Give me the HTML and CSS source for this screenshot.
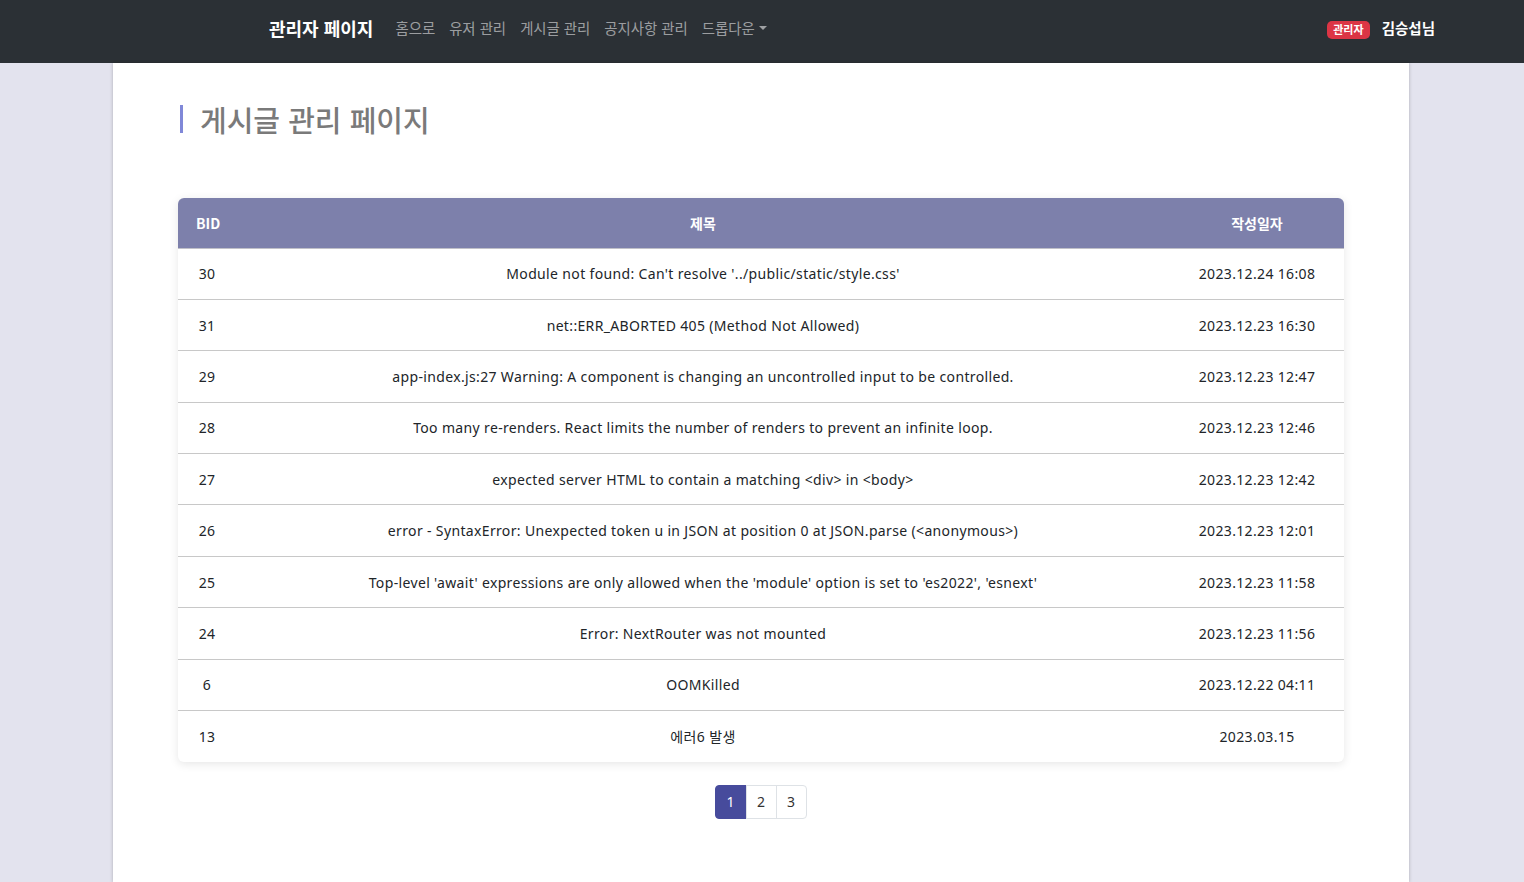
FILE: index.html
```html
<!DOCTYPE html>
<html lang="ko">
<head>
<meta charset="utf-8">
<title>관리자 페이지</title>
<link rel="stylesheet" href="styles.css">
</head>
<body>
<nav class="navbar">
  <div class="nav-inner">
    <div class="nav-left">
      <a class="brand">관리자 페이지</a>
      <ul class="nav-links">
        <li>홈으로</li>
        <li>유저 관리</li>
        <li>게시글 관리</li>
        <li>공지사항 관리</li>
        <li class="dropdown">드롭다운<span class="caret"></span></li>
      </ul>
    </div>
    <div class="nav-right">
      <span class="badge">관리자</span>
      <span class="user">김승섭님</span>
    </div>
  </div>
</nav>
<main class="page">
  <div class="content">
    <h1 class="title">게시글 관리 페이지</h1>
    <div class="table-card">
      <table class="board">
        <thead>
          <tr><th class="c-id">BID</th><th class="c-title">제목</th><th class="c-date">작성일자</th></tr>
        </thead>
        <tbody>
          <tr><td class="c-id">30</td><td>Module not found: Can't resolve '../public/static/style.css'</td><td>2023.12.24 16:08</td></tr>
          <tr><td class="c-id">31</td><td>net::ERR_ABORTED 405 (Method Not Allowed)</td><td>2023.12.23 16:30</td></tr>
          <tr><td class="c-id">29</td><td>app-index.js:27 Warning: A component is changing an uncontrolled input to be controlled.</td><td>2023.12.23 12:47</td></tr>
          <tr><td class="c-id">28</td><td>Too many re-renders. React limits the number of renders to prevent an infinite loop.</td><td>2023.12.23 12:46</td></tr>
          <tr><td class="c-id">27</td><td>expected server HTML to contain a matching &lt;div&gt; in &lt;body&gt;</td><td>2023.12.23 12:42</td></tr>
          <tr><td class="c-id">26</td><td>error - SyntaxError: Unexpected token u in JSON at position 0 at JSON.parse (&lt;anonymous&gt;)</td><td>2023.12.23 12:01</td></tr>
          <tr><td class="c-id">25</td><td>Top-level 'await' expressions are only allowed when the 'module' option is set to 'es2022', 'esnext'</td><td>2023.12.23 11:58</td></tr>
          <tr><td class="c-id">24</td><td>Error: NextRouter was not mounted</td><td>2023.12.23 11:56</td></tr>
          <tr><td class="c-id">6</td><td>OOMKilled</td><td>2023.12.22 04:11</td></tr>
          <tr><td class="c-id">13</td><td>에러6 발생</td><td>2023.03.15</td></tr>
        </tbody>
      </table>
    </div>
    <ul class="pagination">
      <li class="active">1</li>
      <li>2</li>
      <li>3</li>
    </ul>
  </div>
</main>
</body>
</html>
```
FILE: styles.css
```css
* { box-sizing: border-box; }
html, body { margin: 0; padding: 0; }
body {
  background: #e3e3ee;
  font-family: "Noto Sans", "Noto Sans CJK KR", sans-serif;
  font-size: 14px;
  color: #212529;
  height: 882px;
  overflow: hidden;
}
.navbar {
  background: #2b3035;
  height: 63px;
}
.nav-inner {
  height: 100%;
  padding: 0 89px 8px 269px;
  display: flex;
  align-items: center;
  justify-content: space-between;
}
.nav-left { display: flex; align-items: center; }
.brand {
  color: #fff;
  font-family: "Noto Sans CJK KR", sans-serif;
  font-weight: 700;
  font-size: 18px;
  margin-right: 22px;
}
.nav-links {
  list-style: none;
  display: flex;
  gap: 14px;
  margin: 0;
  padding: 0;
}
.nav-links li {
  color: rgba(255,255,255,.55);
  font-family: "Noto Sans CJK KR", sans-serif;
  font-size: 14.4px;
  display: flex;
  align-items: center;
}
.caret {
  display: inline-block;
  margin-left: 4px;
  border-top: 4px solid rgba(255,255,255,.55);
  border-left: 4px solid transparent;
  border-right: 4px solid transparent;
}
.nav-right { display: flex; align-items: center; gap: 12px; }
.badge {
  background: #dc3545;
  color: #fff;
  font-family: "Noto Sans CJK KR", sans-serif;
  font-weight: 700;
  font-size: 11px;
  line-height: 1;
  padding: 3px 6px 4px;
  border-radius: 5px;
  margin-top: 4px;
}
.user {
  color: #fff;
  font-family: "Noto Sans CJK KR", sans-serif;
  font-weight: 700;
  font-size: 14.5px;
}
.page {
  width: 1296px;
  margin: 0 auto;
  position: relative;
  left: -1px;
  background: #fff;
  min-height: 819px;
  box-shadow: -1px 0 3px rgba(0,0,0,.12), 1px 0 3px rgba(0,0,0,.12);
}
.content { padding: 42px 65px 0; }
.title {
  margin: 0 0 65px 2px;
  padding-left: 17px;
  border-left: 3px solid #8088d8;
  font-family: "Noto Sans CJK KR", sans-serif;
  font-size: 29px;
  font-weight: 500;
  line-height: 28px;
  color: #7a7a7a;
}
.table-card {
  border-radius: 6px;
  overflow: hidden;
  box-shadow: 0 2px 10px rgba(0,0,0,.10);
}
.board {
  width: 100%;
  border-collapse: collapse;
}
.board th {
  background: #7d80ab;
  color: #fff;
  font-family: "Noto Sans CJK KR", sans-serif;
  font-weight: 700;
  font-size: 14px;
  height: 50px;
  text-align: center;
  border-bottom: 1px solid #c0c0c8;
}
.board th.c-id { text-align: left; padding-left: 18px; width: 58px; }
.board th.c-date { width: 174px; }
.board td {
  height: 51.4px;
  text-align: center;
  border-bottom: 1px solid #c8c8c8;
  font-family: "Noto Sans", "Noto Sans CJK KR", sans-serif;
  font-size: 14px;
  letter-spacing: 0.35px;
  color: #212529;
}
.board tbody tr:last-child td { border-bottom: none; }
.board td.c-id { width: 58px; }
.pagination {
  list-style: none;
  display: flex;
  justify-content: center;
  margin: 23px 0 0;
  padding: 0;
}
.pagination li {
  width: 31px;
  height: 34px;
  display: flex;
  align-items: center;
  justify-content: center;
  border: 1px solid #dee2e6;
  margin-left: -1px;
  font-size: 14px;
  color: #333;
}
.pagination li:first-child { border-radius: 4px 0 0 4px; width: 32px; }
.pagination li:last-child { border-radius: 0 4px 4px 0; }
.pagination li.active {
  background: #474b9c;
  border-color: #474b9c;
  color: #fff;
}
```
